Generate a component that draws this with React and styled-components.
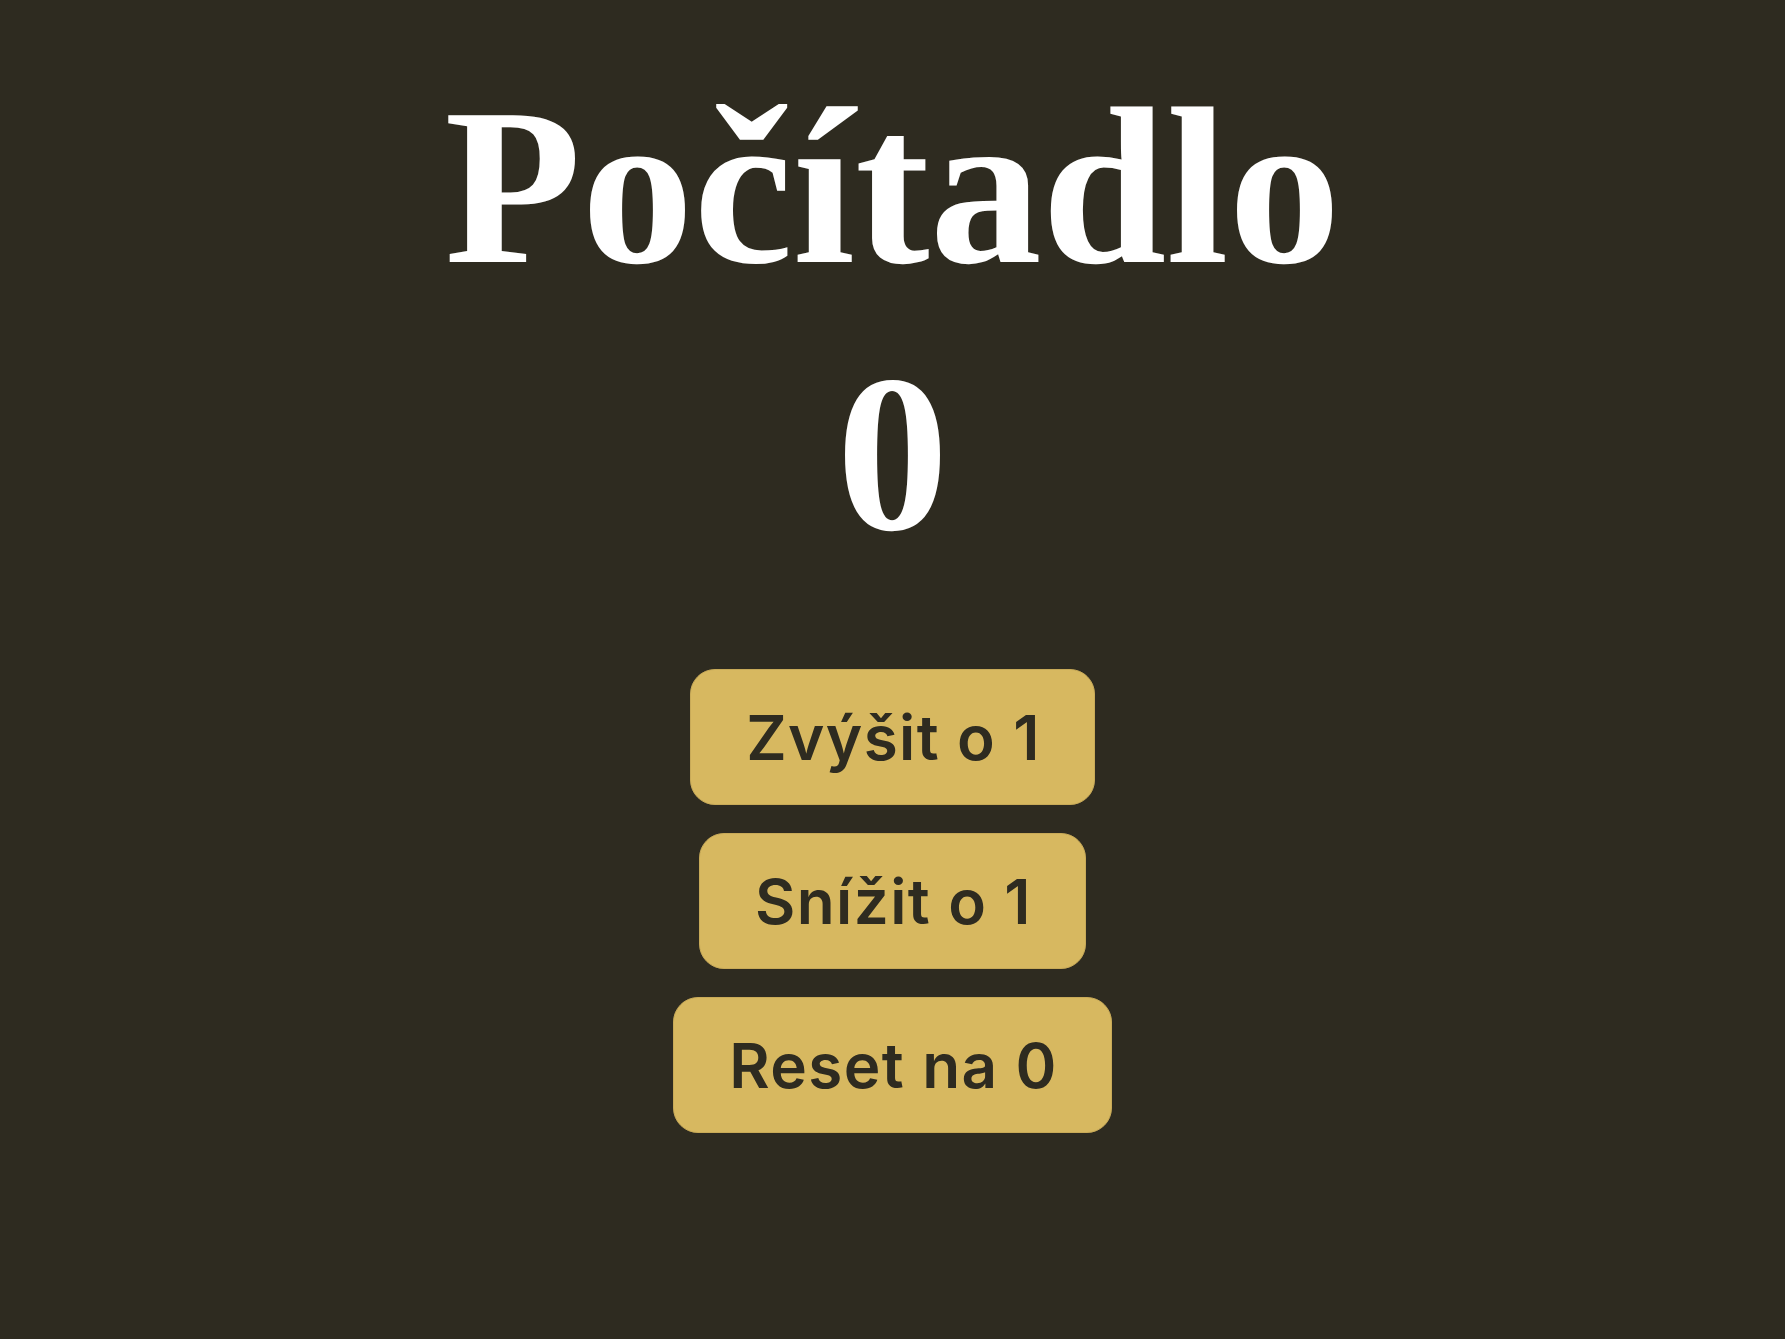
import React, { useState } from "react";
import styled, { createGlobalStyle } from "styled-components";

const Global = createGlobalStyle`
  html, body {
    margin: 0;
    padding: 0;
    background: #2e2b20;
  }
  body {
    min-height: 100vh;
    font-family: "Liberation Serif", "Times New Roman", serif;
    text-rendering: geometricPrecision;
  }
`;

const Page = styled.main`
  min-height: 100vh;
  box-sizing: border-box;
  padding-top: 59px;
  display: flex;
  flex-direction: column;
  align-items: center;
  background: #2e2b20;
`;

const Title = styled.h1`
  margin: 0;
  font-family: "Liberation Serif", "Times New Roman", serif;
  font-weight: 700;
  font-size: 224px;
  line-height: 257px;
  color: #ffffff;
  text-rendering: geometricPrecision;
`;

const Count = styled.div`
  margin-top: 10px;
  font-family: "Liberation Serif", "Times New Roman", serif;
  font-weight: 700;
  font-size: 224px;
  line-height: 257px;
  color: #ffffff;
  text-rendering: geometricPrecision;
`;

const Buttons = styled.div`
  margin-top: 86px;
  display: flex;
  flex-direction: column;
  align-items: center;
  gap: 28px;
`;

const Button = styled.button`
  box-sizing: border-box;
  height: 136px;
  padding: 0 53px 0 55px;
  border: 1px solid #c8aa58;
  border-radius: 25px;
  background: #d7b860;
  color: #2e2b20;
  font-family: Inter, "Noto Sans", sans-serif;
  font-weight: 600;
  font-size: 62px;
  line-height: 75px;
  letter-spacing: 1.4px;
  cursor: pointer;
`;

export default function App() {
  const [count, setCount] = useState(0);
  return (
    <>
      <Global />
      <Page>
        <Title>Počítadlo</Title>
        <Count>{count}</Count>
        <Buttons>
          <Button onClick={() => setCount((c) => c + 1)}>Zvýšit o 1</Button>
          <Button onClick={() => setCount((c) => c - 1)}>Snížit o 1</Button>
          <Button onClick={() => setCount(0)}>Reset na 0</Button>
        </Buttons>
      </Page>
    </>
  );
}
